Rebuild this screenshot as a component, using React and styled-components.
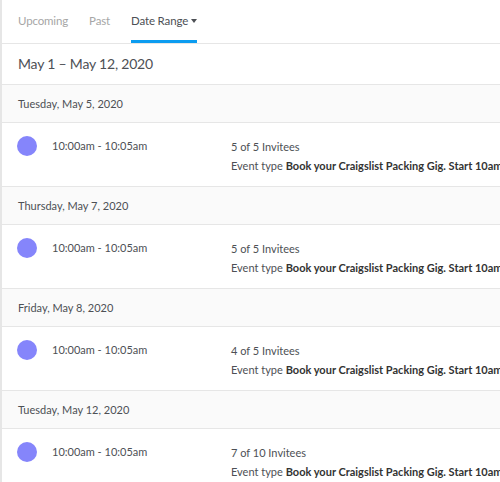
import React from "react";
import styled, { createGlobalStyle } from "styled-components";

const Global = createGlobalStyle`
  body {
    margin: 0;
    background: #fff;
    font-family: "Lato", "Open Sans", sans-serif;
    color: #4d5055;
  }
`;

const Page = styled.div`
  width: 500px;
  height: 482px;
  overflow: hidden;
  border-left: 2px solid #e6e6e6;
  box-sizing: border-box;
`;

const Tabs = styled.div`
  height: 44px;
  display: flex;
  align-items: stretch;
  padding-left: 16px;
  gap: 21px;
  border-bottom: 1px solid #e6e6e6;
  box-sizing: border-box;
`;

const Tab = styled.div`
  display: flex;
  align-items: center;
  font-size: 11.5px;
  letter-spacing: -0.15px;
  color: ${(p) => (p.$active ? "#4d5055" : "#a6a6a6")};
  border-bottom: 3px solid ${(p) => (p.$active ? "#0b9cf0" : "transparent")};
  padding-top: 1px;
  box-sizing: border-box;
  cursor: pointer;
`;

const Caret = styled.span`
  display: inline-block;
  margin-left: 3px;
  border-left: 3px solid transparent;
  border-right: 3px solid transparent;
  border-top: 4px solid #4d5055;
`;

const RangeTitle = styled.div`
  height: 41px;
  display: flex;
  align-items: center;
  padding-left: 16px;
  padding-bottom: 1px;
  box-sizing: border-box;
  font-size: 14px;
  letter-spacing: -0.2px;
  color: #4d5055;
  border-bottom: 1px solid #e6e6e6;
`;

const DayHeader = styled.div`
  height: 38px;
  display: flex;
  align-items: center;
  padding-left: 16px;
  padding-bottom: 1px;
  box-sizing: border-box;
  font-size: 11px;
  background: #fafafa;
  border-bottom: 1px solid #e6e6e6;
`;

const Row = styled.div`
  height: 64px;
  display: flex;
  align-items: flex-start;
  padding: 13px 0 0 15px;
  box-sizing: border-box;
  border-bottom: 1px solid #e6e6e6;
  white-space: nowrap;
`;

const Dot = styled.span`
  width: 20px;
  height: 20px;
  border-radius: 50%;
  background: #8585fb;
  flex-shrink: 0;
`;

const Time = styled.div`
  width: 179px;
  flex-shrink: 0;
  margin-left: 15px;
  font-size: 11px;
  line-height: 20px;
`;

const Details = styled.div`
  font-size: 11px;
  line-height: 19px;
  padding-top: 1px;
  b {
    font-weight: 700;
    color: #333;
  }
`;

const days = [
  { day: "Tuesday, May 5, 2020", invitees: "5 of 5 Invitees" },
  { day: "Thursday, May 7, 2020", invitees: "5 of 5 Invitees" },
  { day: "Friday, May 8, 2020", invitees: "4 of 5 Invitees" },
  { day: "Tuesday, May 12, 2020", invitees: "7 of 10 Invitees" },
];

export default function App() {
  return (
    <Page>
      <Global />
      <Tabs>
        <Tab>Upcoming</Tab>
        <Tab>Past</Tab>
        <Tab $active>
          Date Range
          <Caret />
        </Tab>
      </Tabs>
      <RangeTitle>May 1 – May 12, 2020</RangeTitle>
      {days.map((d) => (
        <React.Fragment key={d.day}>
          <DayHeader>{d.day}</DayHeader>
          <Row>
            <Dot />
            <Time>10:00am - 10:05am</Time>
            <Details>
              <div>{d.invitees}</div>
              <div>
                Event type <b>Book your Craigslist Packing Gig. Start 10am</b>
              </div>
            </Details>
          </Row>
        </React.Fragment>
      ))}
    </Page>
  );
}
